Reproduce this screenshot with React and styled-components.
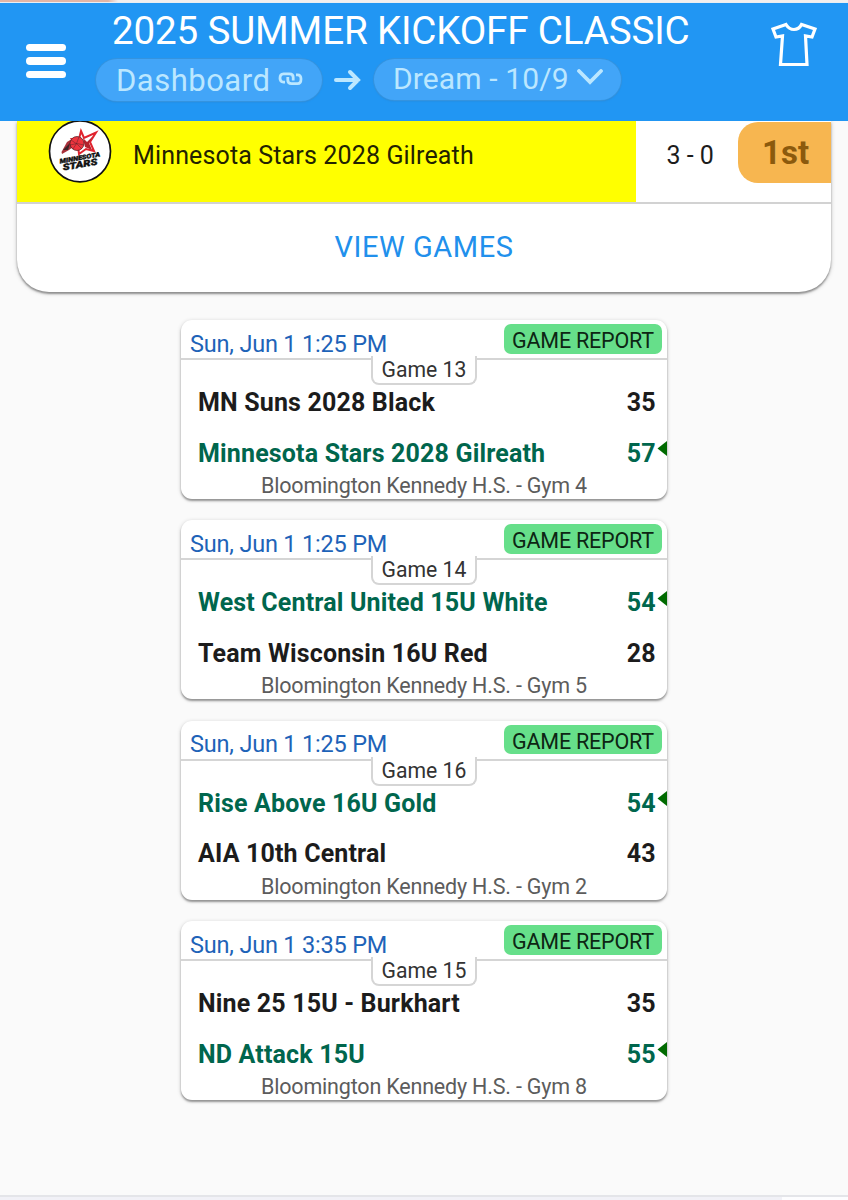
import React from "react";
import styled, { createGlobalStyle } from "styled-components";

const GlobalStyle = createGlobalStyle`
  * {
    box-sizing: border-box;
  }
  body {
    margin: 0;
    background-color: #fafafa;
    font-family: Roboto, "Liberation Sans", sans-serif;
    color: #1c1c1c;
  }
`;
const Page = styled.div`
  width: 848px;
  height: 1200px;
  display: flex;
  flex-direction: column;
  overflow: hidden;
`;
const TopStrip = styled.div`
  height: 3px;
  flex: none;
  background: linear-gradient(to right, #e3b5a5 0 108px, #f3efee 118px);
  border-bottom: 1px solid #e9eef3;
`;
const Header = styled.header`
  height: 118px;
  flex: none;
  display: flex;
  align-items: flex-start;
  background-color: #2196f3;
  color: white;
  position: relative;
  z-index: 1;
`;
const MenuBtn = styled.button`
  width: 40px;
  margin: 41px 30px 0 26px;
  padding: 0;
  border: none;
  background: none;
  display: flex;
  flex-direction: column;
  gap: 6px;
`;
const MenuBar = styled.span`
  height: 7.3px;
  border-radius: 4px;
  background-color: white;
`;
const HeaderMain = styled.div`
  flex: 1;
`;
const Title = styled.h1`
  margin: 3.5px 0 0 16px;
  font-size: 38.6px;
  line-height: 48px;
  font-weight: 400;
  white-space: nowrap;
  letter-spacing: -0.16px;
`;
const Crumbs = styled.nav`
  margin-top: 4.5px;
  display: flex;
  align-items: flex-start;
  color: #bbe7ff;
`;
const Crumb = styled.div`
  width: ${(props) => props.$width}px;
  height: ${(props) => props.$height}px;
  padding-left: ${(props) => props.$pad}px;
  padding-bottom: ${(props) => props.$lift}px;
  display: flex;
  align-items: center;
  gap: ${(props) => props.$gap}px;
  border-radius: 22px;
  background-color: #42a5f8;
  box-shadow: 0 0 0 1px #3493df, 0 1px 2px #2c85cf;
  font-size: ${(props) => props.$size}px;
  white-space: nowrap;
  letter-spacing: ${(props) => props.$spacing}px;
`;
const CrumbIcon = styled.svg`
  fill: none;
  stroke: #bbe7ff;
  margin-bottom: 2px;
`;
const ArrowIcon = styled.svg`
  width: 28px;
  height: 22px;
  margin: 10px 13px 0 11px;
`;
const ShirtBtn = styled.div`
  margin: 19px 30px 0 0;
  width: 48px;
  height: 46px;
`;
const Standings = styled.section`
  width: 814px;
  height: 171px;
  flex: none;
  margin: 0 0 0 17px;
  background-color: white;
  border-radius: 0 0 32px 32px;
  box-shadow: 0 2px 2px rgba(0, 0, 0, 0.35), 0 1px 5px rgba(0, 0, 0, 0.2);
`;
const StandingRow = styled.div`
  height: 83px;
  display: flex;
  border-bottom: 2px solid #d2d2d2;
`;
const TeamCell = styled.div`
  width: 618.5px;
  display: flex;
  align-items: flex-start;
  background-color: #ffff00;
`;
const TeamLogo = styled.svg`
  width: 64px;
  height: 64px;
  margin: -2px 21px 0 31px;
`;
const StandingName = styled.span`
  font-size: 25px;
  line-height: 30px;
  margin-top: 20px;
  letter-spacing: 0.14px;
  color: #222200;
`;
const RecordCell = styled.span`
  width: 102.5px;
  padding: 20px 0 0 31px;
  font-size: 25px;
  line-height: 30px;
  white-space: nowrap;
`;
const Place = styled.div`
  flex: 1;
  height: 61px;
  margin-top: 1px;
  padding-left: 24px;
  border-radius: 20px 0 0 20px;
  background-color: #f7b650;
  color: #8c5a0d;
  font-size: 33px;
  line-height: 61px;
  font-weight: 700;
`;
const ViewGames = styled.button`
  width: 100%;
  height: 85px;
  padding: 0;
  border: none;
  background: none;
  color: #2190ec;
  font-family: inherit;
  font-size: 29px;
  letter-spacing: 0.55px;
`;
const GameList = styled.main`
  margin-top: 28px;
  display: flex;
  flex-direction: column;
  align-items: center;
  gap: 21.4px;
`;
const GameCard = styled.article`
  width: 486px;
  height: 179px;
  border-radius: 11px;
  background-color: white;
  box-shadow: 0 2px 2px rgba(0, 0, 0, 0.32), 0 1px 4px rgba(0, 0, 0, 0.2);
`;
const GameHead = styled.div`
  height: 40px;
  padding: 4px 5px 0 9px;
  display: flex;
  justify-content: space-between;
  border-bottom: 2px solid #d5d5d5;
`;
const GameTime = styled.span`
  margin-top: 5.5px;
  font-size: 23.5px;
  line-height: 28px;
  letter-spacing: -0.19px;
  color: #1e63b8;
  white-space: nowrap;
`;
const Report = styled.span`
  width: 158px;
  height: 29.5px;
  border-radius: 7px;
  background-color: #66df8a;
  color: #0d2614;
  font-size: 21.5px;
  line-height: 33px;
  letter-spacing: -0.2px;
  text-align: center;
  white-space: nowrap;
`;
const GameTag = styled.div`
  width: 106px;
  height: 29px;
  margin: -4px auto 0;
  border: 2px solid #d5d5d5;
  border-top: none;
  border-radius: 0 0 8px 8px;
  background-color: white;
  color: #333;
  font-size: 21.2px;
  line-height: 27.5px;
  text-align: center;
  white-space: nowrap;
  position: relative;
`;
const TeamRow = styled.div`
  height: ${(props) => (props.$last ? 50 : 51)}px;
  margin-top: ${(props) => (props.$last ? 0 : -8)}px;
  padding-left: 17px;
  display: flex;
  align-items: center;
  font-size: 25px;
  font-weight: 700;
  letter-spacing: 0.16px;
  color: ${(props) => (props.$winner ? "#00664d" : "#1c1c1c")};
`;
const TeamName = styled.span`
  flex: 1;
  white-space: nowrap;
`;
const Score = styled.span`
  letter-spacing: 0.3px;
`;
const WinMark = styled.svg`
  width: 11px;
  height: 16px;
  margin-bottom: 8px;
  fill: ${(props) => (props.$on ? "#006a00" : "none")};
`;
const Venue = styled.div`
  margin-top: -7px;
  padding-top: 2px;
  font-size: 21.5px;
  line-height: 26px;
  letter-spacing: -0.19px;
  text-align: center;
  color: #5c5c5c;
`;
const BottomEdge = styled.footer`
  height: 5px;
  flex: none;
  margin-top: auto;
  border-top: 2px solid #e4e5e9;
  background: linear-gradient(to right, #f1f1f7 0 782px, #fdfdff 782px);
`;

const GAMES = [
  {
    id: 13,
    time: "Sun, Jun 1 1:25 PM",
    gym: 4,
    teams: [
      ["MN Suns 2028 Black", 35],
      ["Minnesota Stars 2028 Gilreath", 57],
    ],
  },
  {
    id: 14,
    time: "Sun, Jun 1 1:25 PM",
    gym: 5,
    teams: [
      ["West Central United 15U White", 54],
      ["Team Wisconsin 16U Red", 28],
    ],
  },
  {
    id: 16,
    time: "Sun, Jun 1 1:25 PM",
    gym: 2,
    teams: [
      ["Rise Above 16U Gold", 54],
      ["AIA 10th Central", 43],
    ],
  },
  {
    id: 15,
    time: "Sun, Jun 1 3:35 PM",
    gym: 8,
    teams: [
      ["Nine 25 15U - Burkhart", 35],
      ["ND Attack 15U", 55],
    ],
  },
];

const StarsLogo = () => (
  <TeamLogo viewBox="0 0 64 64">
    <circle cx="32" cy="32.3" r="30.5" fill="white" stroke="#111" strokeWidth="1.7" />
    <path
      d="M33 12L36 19L48 13.5L42 23L46 32L38 30L31 35L30 27L24 20L31 20Z"
      fill="white"
      stroke="#e0232e"
      strokeWidth="2"
    />
    <path d="M35 19L39 23L45 17L41 24L44 31L37 28Z" fill="#b3232c" />
    <path d="M13.5 33L19 23L27 18L25 28L21 31L14 35Z" fill="#a8303a" />
    <path d="M15 31L22 24L20 31Z" fill="#3a2427" />
    <circle cx="29" cy="24.5" r="7" fill="#ee343e" stroke="#4c1c20" strokeWidth="0.7" />
    <path d="M23 21Q30 25 34 30M31 18Q29 25 25 30M22 26Q29 23 36 26" fill="none" stroke="#58252a" strokeWidth="0.5" />
    <g
      transform="rotate(-10 32 40)"
      fontFamily="Roboto, sans-serif"
      fontWeight="900"
      fontStyle="italic"
      textAnchor="middle"
      fill="#111"
      stroke="#111"
      strokeWidth="0.4"
    >
      <text x="32" y="41" fontSize="6.2" textLength="41" lengthAdjust="spacingAndGlyphs">
        MINNESOTA
      </text>
      <text x="31" y="48.5" fontSize="9" textLength="35" lengthAdjust="spacingAndGlyphs">
        STARS
      </text>
    </g>
  </TeamLogo>
);

const Game = ({ game }) => {
  const best = Math.max(...game.teams.map((t) => t[1]));

  return (
    <GameCard>
      <GameHead>
        <GameTime>{game.time}</GameTime>
        <Report>GAME REPORT</Report>
      </GameHead>
      <GameTag>Game {game.id}</GameTag>
      {game.teams.map(([name, score], i) => (
        <TeamRow key={name} $winner={score === best} $last={i === 1}>
          <TeamName>{name}</TeamName>
          <Score>{score}</Score>
          <WinMark viewBox="0 0 11 16" $on={score === best}>
            <path d="M1.5 7.5L11 0V15Z" />
          </WinMark>
        </TeamRow>
      ))}
      <Venue>Bloomington Kennedy H.S. - Gym {game.gym}</Venue>
    </GameCard>
  );
};

const App = () => {
  return (
    <>
      <GlobalStyle />
      <Page>
        <TopStrip />
        <Header>
          <MenuBtn aria-label="Menu">
            <MenuBar />
            <MenuBar />
            <MenuBar />
          </MenuBtn>
          <HeaderMain>
            <Title>2025 SUMMER KICKOFF CLASSIC</Title>
            <Crumbs>
              <Crumb $width={226} $height={42} $pad={20} $gap={8} $size={31} $spacing={0.5} $lift={0}>
                Dashboard
                <CrumbIcon width="25" height="14" viewBox="0 0 25 14" strokeWidth="2.8">
                  <path d="M7 10.2H5.5Q2 10.2 2 6.2Q2 1.8 5.5 1.8H11.5Q15.2 1.8 15.2 5.5V8.5" />
                  <path d="M18 2.8H19.5Q23 2.8 23 7Q23 11.6 19.5 11.6H13.5Q9.8 11.6 9.8 8V5" />
                </CrumbIcon>
              </Crumb>
              <ArrowIcon viewBox="0 0 28 22" fill="none" stroke="#bbe7ff" strokeWidth="4" strokeLinecap="round">
                <path d="M3 11H25M17 3L25 11L17 19" />
              </ArrowIcon>
              <Crumb $width={247} $height={40.5} $pad={19} $gap={8} $size={30} $spacing={0.12} $lift={2}>
                Dream - 10/9
                <CrumbIcon width="26" height="16" viewBox="0 0 26 16" strokeWidth="3.8" strokeLinecap="round">
                  <path d="M2 2L13 13L24 2" />
                </CrumbIcon>
              </Crumb>
            </Crumbs>
          </HeaderMain>
          <ShirtBtn>
            <svg width="48" height="46" viewBox="0 0 48 46" fill="none" stroke="white" strokeWidth="3.2">
              <path d="M16 2.5L3 7L6 15L12.5 14L10.5 42.5H37L35.5 14L42 15L45 7L31.5 2.5Q29 7.5 24 7.5Q19 7.5 16 2.5Z" />
            </svg>
          </ShirtBtn>
        </Header>
        <Standings>
          <StandingRow>
            <TeamCell>
              <StarsLogo />
              <StandingName>Minnesota Stars 2028 Gilreath</StandingName>
            </TeamCell>
            <RecordCell>3 - 0</RecordCell>
            <Place>1st</Place>
          </StandingRow>
          <ViewGames>VIEW GAMES</ViewGames>
        </Standings>
        <GameList>
          {GAMES.map((game) => (
            <Game key={game.id} game={game} />
          ))}
        </GameList>
        <BottomEdge />
      </Page>
    </>
  );
};

export default App;
